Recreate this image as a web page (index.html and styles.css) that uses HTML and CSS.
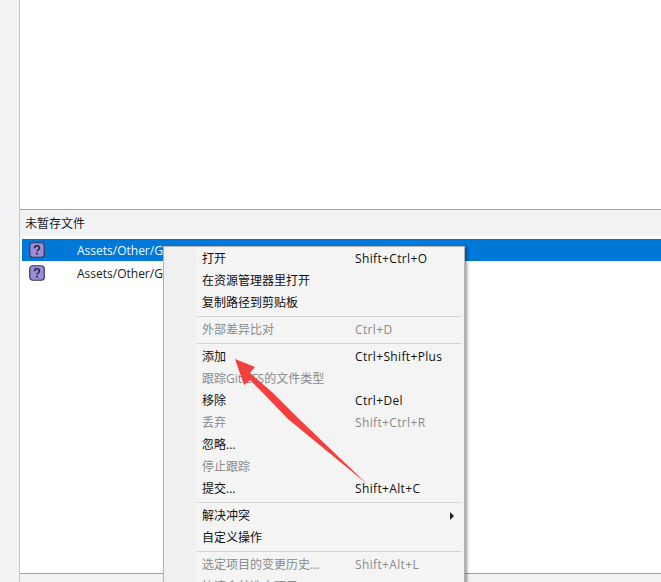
FILE: index.html
```html
<!DOCTYPE html>
<html lang="zh">
<head>
<meta charset="utf-8">
<title>未暂存文件</title>
<link rel="stylesheet" href="styles.css">
</head>
<body>
<div class="app">
  <div class="side"></div>
  <div class="main">
    <div class="top-pane"></div>
    <div class="section-head">未暂存文件</div>
    <div class="file-list">
      <div class="file-row selected">
        <svg class="status" viewBox="0 0 16 16"><rect x="0.75" y="0.75" width="14.5" height="14.5" rx="3" fill="#9b8cd8" stroke="#3a3560" stroke-width="1.2"/><path d="M5.6 6.2c0-1.5 1-2.4 2.4-2.4s2.4.9 2.4 2.2c0 1.9-2.3 1.9-2.3 3.6" fill="none" stroke="#2b2740" stroke-width="1.6"/><rect x="7.1" y="10.8" width="1.8" height="1.8" fill="#2b2740"/></svg>
        <span class="path">Assets/Other/G</span>
      </div>
      <div class="file-row">
        <svg class="status" viewBox="0 0 16 16"><rect x="0.75" y="0.75" width="14.5" height="14.5" rx="3" fill="#9b8cd8" stroke="#3a3560" stroke-width="1.2"/><path d="M5.6 6.2c0-1.5 1-2.4 2.4-2.4s2.4.9 2.4 2.2c0 1.9-2.3 1.9-2.3 3.6" fill="none" stroke="#2b2740" stroke-width="1.6"/><rect x="7.1" y="10.8" width="1.8" height="1.8" fill="#2b2740"/></svg>
        <span class="path">Assets/Other/G</span>
      </div>
    </div>
    <div class="bottom-bar"></div>
  </div>
</div>

<div class="menu">
  <div class="item"><span class="label">打开</span><span class="keys">Shift+Ctrl+O</span></div>
  <div class="item"><span class="label">在资源管理器里打开</span></div>
  <div class="item"><span class="label">复制路径到剪贴板</span></div>
  <div class="sep"></div>
  <div class="item off"><span class="label">外部差异比对</span><span class="keys">Ctrl+D</span></div>
  <div class="sep"></div>
  <div class="item"><span class="label">添加</span><span class="keys">Ctrl+Shift+Plus</span></div>
  <div class="item off"><span class="label">跟踪Git LFS的文件类型</span></div>
  <div class="item"><span class="label">移除</span><span class="keys">Ctrl+Del</span></div>
  <div class="item off"><span class="label">丢弃</span><span class="keys">Shift+Ctrl+R</span></div>
  <div class="item"><span class="label">忽略...</span></div>
  <div class="item off"><span class="label">停止跟踪</span></div>
  <div class="item"><span class="label">提交...</span><span class="keys">Shift+Alt+C</span></div>
  <div class="sep"></div>
  <div class="item"><span class="label">解决冲突</span><span class="caret"></span></div>
  <div class="item"><span class="label">自定义操作</span></div>
  <div class="sep"></div>
  <div class="item off"><span class="label">选定项目的变更历史...</span><span class="keys">Shift+Alt+L</span></div>
  <div class="item off"><span class="label">快速合并选中项目</span></div>
</div>

<svg class="arrow" viewBox="0 0 661 582" aria-hidden="true">
  <polygon points="235,359 255,367 250,373 273,393 298,418 367,484 288,419 263,393 250,380 244,385" fill="#f43f3f"/>
</svg>
</body>
</html>
```
FILE: styles.css
```css
* { box-sizing: border-box; }
html, body {
  margin: 0;
  height: 582px;
  overflow: hidden;
  background: #fff;
}
body {
  font-family: "Open Sans", "Noto Sans CJK SC", sans-serif;
  font-size: 12px;
  color: #1a1a1a;
}
.app {
  display: flex;
  height: 582px;
}
.side {
  width: 19px;
  flex: none;
  background: #f1f2f4;
}
.main {
  flex: 1;
  display: flex;
  flex-direction: column;
  border-left: 1px solid #c4c6c9;
}
.top-pane {
  height: 209px;
  flex: none;
  background: #fff;
  border-bottom: 1px solid #a3a3a3;
  box-sizing: content-box;
}
.section-head {
  height: 26px;
  flex: none;
  padding: 6px 0 0 5px;
  line-height: 16px;
  background: #f2f3f5;
}
.file-list {
  flex: 1;
  padding: 2px 0 0 2px;
  background: #fff;
  border-top: 1px solid #f9fafb;
}
.file-row {
  height: 22px;
  margin-bottom: 1px;
  display: flex;
  align-items: center;
  padding-left: 7px;
}
.file-row.selected {
  background: #0078d7;
  color: #f3f8fd;
}
.status {
  width: 16px;
  height: 16px;
  flex: none;
  margin-right: 32px;
}
.path { white-space: nowrap; }
.bottom-bar {
  height: 9px;
  flex: none;
  background: #f2f3f5;
  border-top: 1px solid #a3a3a3;
}
.menu {
  position: absolute;
  left: 163px;
  top: 246px;
  width: 302px;
  padding: 1px;
  background: linear-gradient(90deg, #f0f0f0 32px, #f4f4f4 32px);
  border: 1px solid #b5b5b5;
  box-shadow: 2px 2px 3px rgba(0, 0, 0, .4);
  color: #111;
}
.item {
  height: 22px;
  display: flex;
  align-items: center;
  position: relative;
  padding-left: 37px;
  line-height: 22px;
  white-space: nowrap;
}
.item.off { color: #8a8a8a; }
.label { width: 153px; flex: none; }
.keys { flex: none; letter-spacing: .35px; }
.caret {
  position: absolute;
  left: 285px;
  top: 7px;
  border-left: 4px solid #222;
  border-top: 4px solid transparent;
  border-bottom: 4px solid transparent;
}
.sep {
  height: 5px;
  margin: 0 2px 0 32px;
  padding-top: 2px;
}
.sep::before {
  content: "";
  display: block;
  height: 1px;
  background: #d4d4d4;
}
.arrow {
  position: absolute;
  left: 0;
  top: 0;
  width: 661px;
  height: 582px;
  pointer-events: none;
}
```
